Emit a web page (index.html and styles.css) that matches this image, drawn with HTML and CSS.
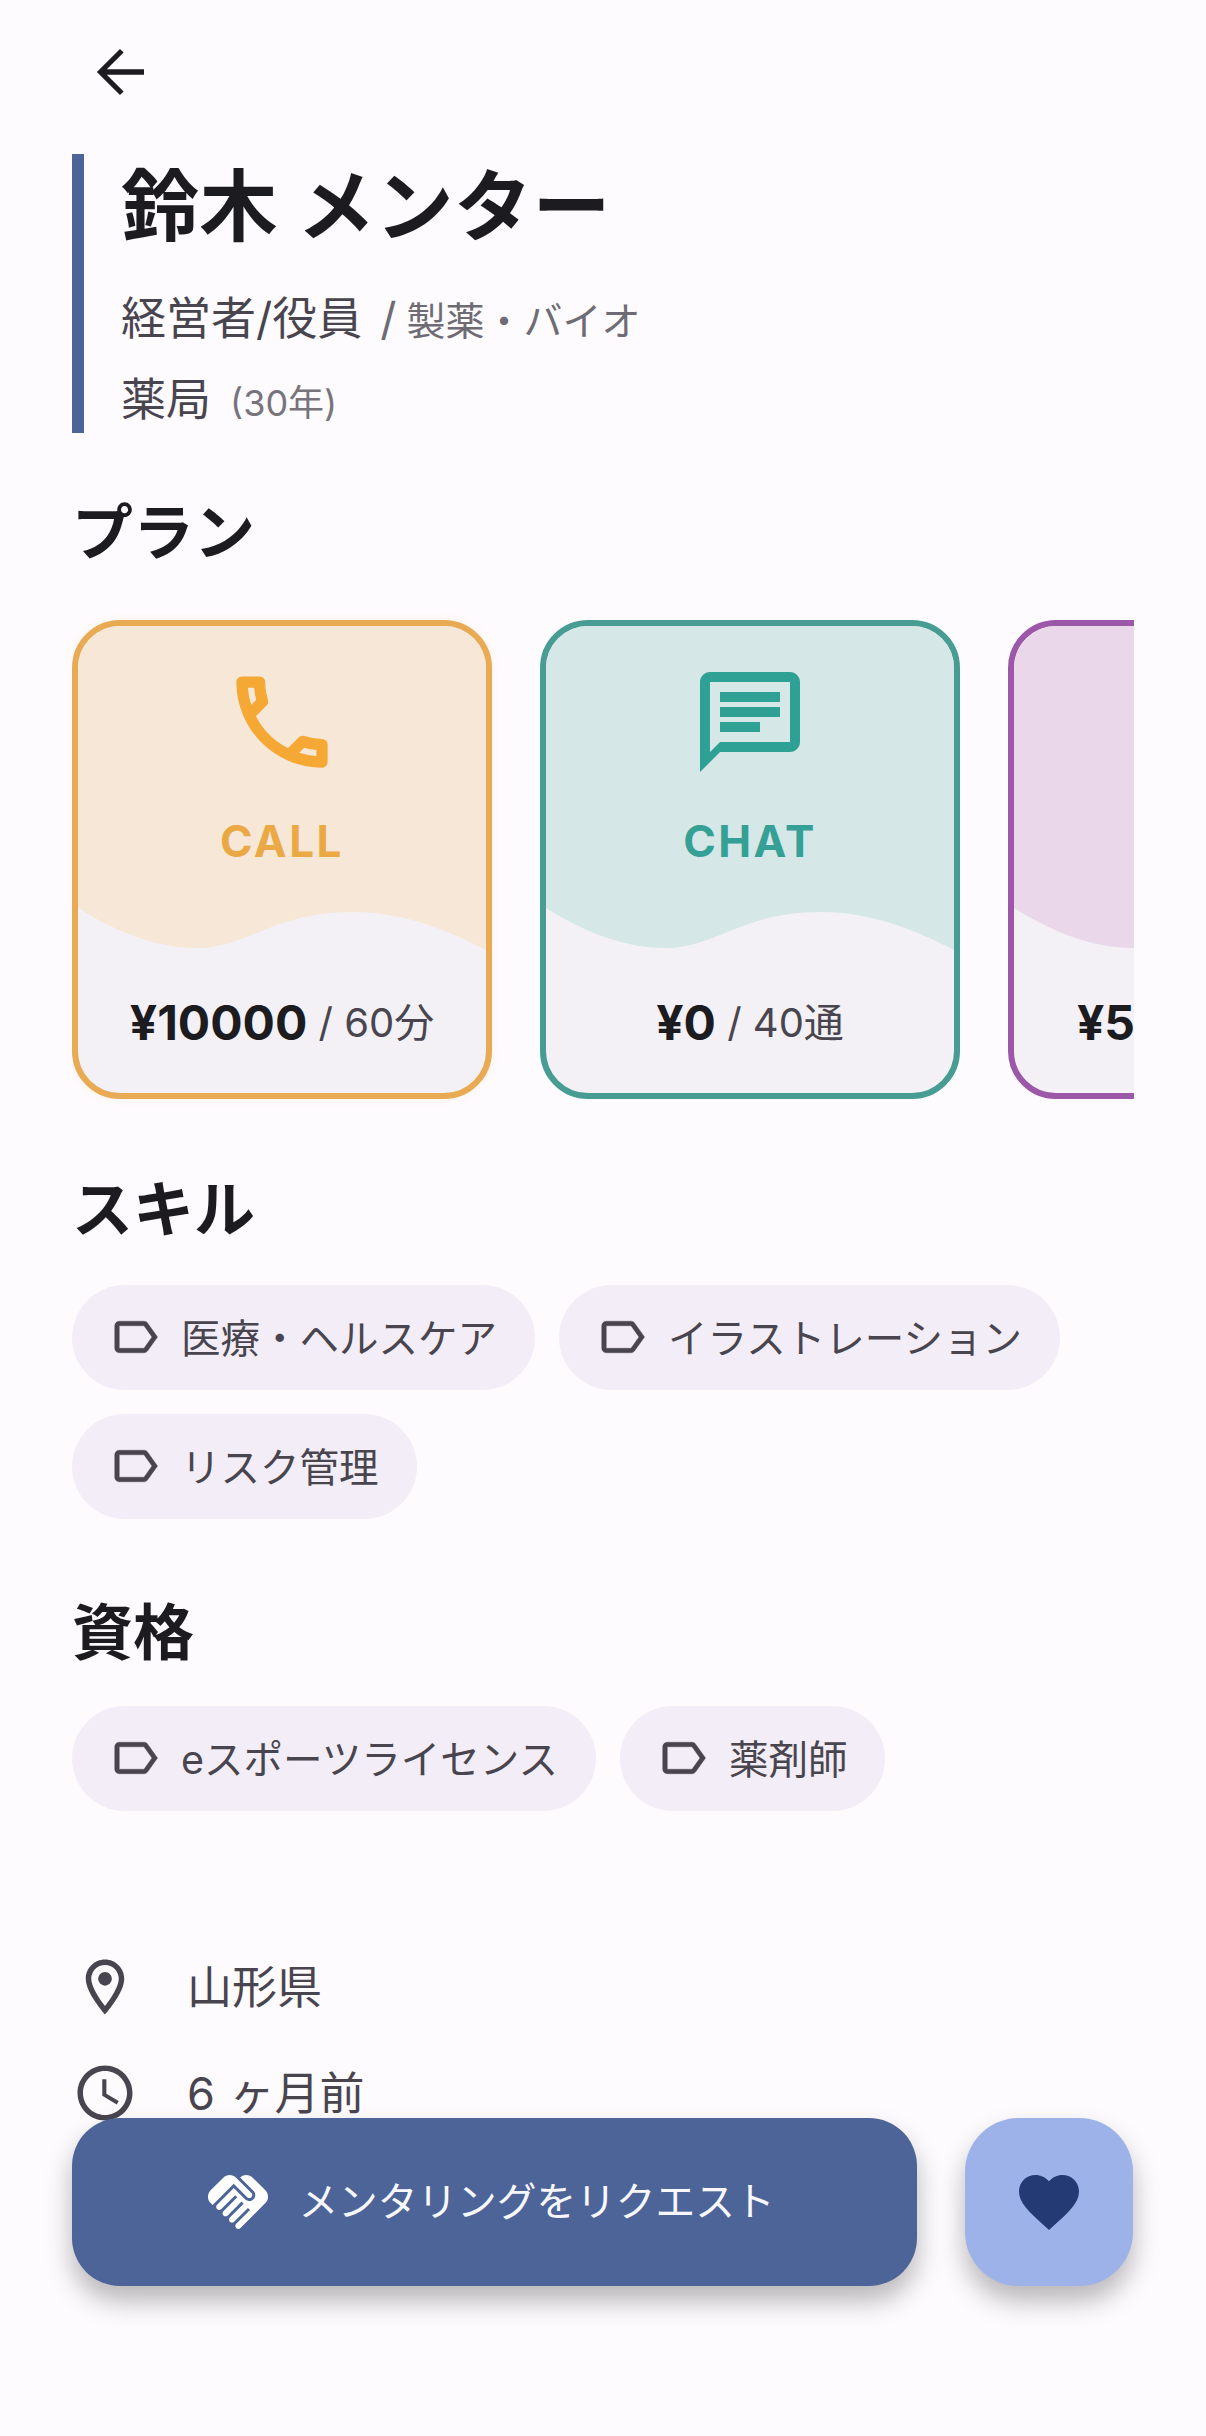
FILE: index.html
```html
<!DOCTYPE html>
<html lang="ja">
<head>
<meta charset="utf-8">
<title>鈴木 メンター</title>
<link rel="stylesheet" href="styles.css">
</head>
<body>
<div class="page">
  <div class="back">
    <svg class="back-icon" viewBox="0 0 24 24"><path d="M20 11.1H7.6l5.6-5.6L12 4.3 4.3 12l7.7 7.7 1.2-1.2-5.6-5.6H20z"/></svg>
  </div>
  <header class="profile">
    <h1 class="name">鈴木 メンター</h1>
    <p class="line"><span class="main">経営者/役員</span><span class="slash">/</span><span class="sub">製薬・バイオ</span></p>
    <p class="line second"><span class="main">薬局</span><span class="years">(30年)</span></p>
  </header>

  <h2 class="section plan-title">プラン</h2>
  <div class="plans">
    <article class="plan call">
      <div class="plan-top">
        <svg class="plan-icon" viewBox="0 0 24 24"><path d="M6.54 5c.06.89.21 1.76.45 2.59l-1.2 1.2c-.41-1.2-.67-2.47-.76-3.79h1.51m9.86 12.02c.85.24 1.72.39 2.6.45v1.49c-1.32-.09-2.59-.35-3.8-.75l1.2-1.19M7.5 3H4c-.55 0-1 .45-1 1 0 9.39 7.61 17 17 17 .55 0 1-.45 1-1v-3.49c0-.55-.45-1-1-1-1.24 0-2.45-.2-3.57-.57-.1-.04-.21-.05-.31-.05-.26 0-.51.1-.71.29l-2.2 2.2c-2.83-1.45-5.15-3.76-6.59-6.59l2.2-2.2c.28-.28.36-.67.25-1.02C8.7 6.45 8.5 5.25 8.5 4c0-.55-.45-1-1-1z"/></svg>
        <div class="plan-name">CALL</div>
      </div>
      <svg class="wave" viewBox="0 0 408 50" preserveAspectRatio="none"><path d="M0 0C40 25 80 40 119 40C170 40 195 4 275 4C325 4 370 22 408 42V50H0Z"/></svg>
      <div class="plan-price"><b>¥10000</b> <span class="unit">/ 60分</span></div>
    </article>
    <article class="plan chat">
      <div class="plan-top">
        <svg class="plan-icon" viewBox="0 0 24 24"><path d="M20 2H4c-1.1 0-2 .9-2 2v18l4-4h14c1.1 0 2-.9 2-2V4c0-1.1-.9-2-2-2zm0 14H6l-2 2V4h16v12z"/><path d="M6 12h8v2H6zM6 9h12v2H6zM6 6h12v2H6z"/></svg>
        <div class="plan-name">CHAT</div>
      </div>
      <svg class="wave" viewBox="0 0 408 50" preserveAspectRatio="none"><path d="M0 0C40 25 80 40 119 40C170 40 195 4 275 4C325 4 370 22 408 42V50H0Z"/></svg>
      <div class="plan-price"><b>¥0</b> <span class="unit">/ 40通</span></div>
    </article>
    <article class="plan video">
      <div class="plan-top"></div>
      <svg class="wave" viewBox="0 0 408 50" preserveAspectRatio="none"><path d="M0 0C40 25 80 40 119 40C170 40 195 4 275 4C325 4 370 22 408 42V50H0Z"/></svg>
      <div class="plan-price"><b>¥5000</b> <span class="unit">/ 60分</span></div>
    </article>
  </div>

  <h2 class="section skill-title">スキル</h2>
  <div class="chips">
    <span class="chip"><svg class="tag" viewBox="0 0 24 24"><path d="M17.63 5.84C17.27 5.33 16.67 5 16 5L5 5.01C3.9 5.01 3 5.9 3 7v10c0 1.1.9 1.99 2 1.99L16 19c.67 0 1.27-.33 1.63-.84L22 12l-4.37-6.16zM16 17H5V7h11l3.55 5L16 17z"/></svg>医療・ヘルスケア</span>
    <span class="chip"><svg class="tag" viewBox="0 0 24 24"><path d="M17.63 5.84C17.27 5.33 16.67 5 16 5L5 5.01C3.9 5.01 3 5.9 3 7v10c0 1.1.9 1.99 2 1.99L16 19c.67 0 1.27-.33 1.63-.84L22 12l-4.37-6.16zM16 17H5V7h11l3.55 5L16 17z"/></svg>イラストレーション</span>
    <span class="chip"><svg class="tag" viewBox="0 0 24 24"><path d="M17.63 5.84C17.27 5.33 16.67 5 16 5L5 5.01C3.9 5.01 3 5.9 3 7v10c0 1.1.9 1.99 2 1.99L16 19c.67 0 1.27-.33 1.63-.84L22 12l-4.37-6.16zM16 17H5V7h11l3.55 5L16 17z"/></svg>リスク管理</span>
  </div>

  <h2 class="section cert-title">資格</h2>
  <div class="chips">
    <span class="chip"><svg class="tag" viewBox="0 0 24 24"><path d="M17.63 5.84C17.27 5.33 16.67 5 16 5L5 5.01C3.9 5.01 3 5.9 3 7v10c0 1.1.9 1.99 2 1.99L16 19c.67 0 1.27-.33 1.63-.84L22 12l-4.37-6.16zM16 17H5V7h11l3.55 5L16 17z"/></svg>eスポーツライセンス</span>
    <span class="chip"><svg class="tag" viewBox="0 0 24 24"><path d="M17.63 5.84C17.27 5.33 16.67 5 16 5L5 5.01C3.9 5.01 3 5.9 3 7v10c0 1.1.9 1.99 2 1.99L16 19c.67 0 1.27-.33 1.63-.84L22 12l-4.37-6.16zM16 17H5V7h11l3.55 5L16 17z"/></svg>薬剤師</span>
  </div>

  <div class="info">
    <div class="info-row">
      <svg class="info-icon" viewBox="0 0 24 24"><path d="M12 2C8.13 2 5 5.13 5 9c0 5.25 7 13 7 13s7-7.75 7-13c0-3.87-3.13-7-7-7zM7 9c0-2.76 2.24-5 5-5s5 2.24 5 5c0 2.88-2.88 7.19-5 9.88C9.92 16.21 7 11.85 7 9z"/><circle cx="12" cy="9" r="2.5"/></svg>
      <span class="info-text">山形県</span>
    </div>
    <div class="info-row">
      <svg class="info-icon" viewBox="0 0 24 24"><path d="M11.99 2C6.47 2 2 6.48 2 12s4.47 10 9.99 10C17.52 22 22 17.52 22 12S17.52 2 11.99 2zM12 20c-4.42 0-8-3.58-8-8s3.58-8 8-8 8 3.58 8 8-3.58 8-8 8z"/><path d="M12.5 7H11v6l5.25 3.15.75-1.23-4.5-2.67z"/></svg>
      <span class="info-text">6 ヶ月前</span>
    </div>
  </div>

  <div class="actions">
    <button class="request">
      <svg class="shake" viewBox="0 0 24 24"><path d="M16.48 10.41c-.39.39-1.04.39-1.43 0l-4.47-4.46-7.05 7.04-.66-.63c-1.17-1.17-1.17-3.07 0-4.24l4.24-4.24c1.17-1.17 3.07-1.17 4.24 0L16.48 9c.39.39.39 1.02 0 1.41zM17.18 8.29c.78.78.78 2.05 0 2.83-1.27 1.27-2.61.22-2.83 0l-3.76-3.76-5.57 5.57c-.39.39-.39 1.02 0 1.41.39.39 1.02.39 1.42 0l4.62-4.62.71.71-4.62 4.62c-.39.39-.39 1.02 0 1.41.39.39 1.02.39 1.42 0l4.62-4.62.71.71-4.62 4.62c-.39.39-.39 1.02 0 1.41.39.39 1.02.39 1.41 0l4.62-4.62.71.71-4.62 4.62c-.39.39-.39 1.02 0 1.41.39.39 1.02.39 1.41 0l8.32-8.34c1.17-1.17 1.17-3.07 0-4.24l-4.24-4.24c-1.15-1.15-3.01-1.17-4.18-.06l4.58 4.59z"/></svg>
      <span class="request-text">メンタリングをリクエスト</span>
    </button>
    <button class="fav">
      <svg class="heart" viewBox="0 0 24 24"><path d="M12 21.35l-1.45-1.32C5.4 15.36 2 12.28 2 8.5 2 5.42 4.42 3 7.5 3c1.74 0 3.41.81 4.5 2.09C13.09 3.81 14.76 3 16.5 3 19.58 3 22 5.42 22 8.5c0 3.78-3.4 6.86-8.55 11.54L12 21.35z"/></svg>
    </button>
  </div>
</div>
</body>
</html>
```

FILE: styles.css
```css
* { box-sizing: border-box; }
html, body { margin: 0; padding: 0; }
body {
  background: #fefbfe;
  font-family: Inter, "Noto Sans CJK JP", sans-serif;
  color: #1c1b1f;
}
.page {
  position: relative;
  width: 1206px;
  height: 2436px;
  overflow: hidden;
  padding: 36px 72px 0;
}
.back { height: 72px; margin: 0 0 46px 12px; }
.back-icon { display: block; width: 72px; height: 72px; fill: #1c1b1f; }

.profile {
  height: 279px;
  padding-top: 3px;
  border-left: 12px solid #4d6499;
  padding-left: 37px;
}
.name { margin: 0; font-size: 78px; line-height: 100px; font-weight: 700; letter-spacing: .5px; }
.line { margin: 29px 0 0; height: 66px; line-height: 66px; white-space: nowrap; color: #49454f; }
.line.second { margin-top: 15px; }
.main { font-size: 45px; }
.slash { font-size: 45px; color: #6f6b74; margin-left: 18px; margin-right: 10px; }
.sub { font-size: 39px; color: #6f6b74; }
.years { font-size: 36px; color: #77747c; margin-left: 19px; }

.section { margin: 0; font-size: 61px; line-height: 80px; font-weight: 700; }
.plan-title { margin-top: 60px; }
.skill-title { margin-top: 59px; }
.cert-title { margin-top: 74px; }

.plans {
  display: flex;
  gap: 48px;
  width: 1062px;
  height: 503px;
  margin-top: 35px;
  padding-top: 12px;
  overflow: hidden;
}
.plan {
  flex: 0 0 420px;
  height: 479px;
  display: flex;
  flex-direction: column;
  border: 6px solid;
  border-radius: 48px;
  overflow: hidden;
  background: #f3f1f5;
}
.plan-top { height: 282px; padding-top: 36px; text-align: center; }
.plan-icon { display: block; width: 120px; height: 120px; margin: 0 auto; }
.plan-name { margin-top: 32px; font-size: 44px; line-height: 54px; font-weight: 700; letter-spacing: 2.5px; }
.wave { display: block; width: 408px; height: 50px; fill: #f3f1f5; }
.plan-price { padding-top: 38px; font-size: 40px; line-height: 54px; text-align: center; color: #49454f; white-space: nowrap; }
.plan-price b { font-size: 48px; color: #1c1b1f; }
.unit { vertical-align: 3px; }

.call { border-color: #e8aa52; box-shadow: 0 0 10px rgba(232,170,82,.12); }
.call .plan-top, .call .wave { background: #f6e7d6; }
.call .plan-icon { fill: #f5a833; stroke: #f5a833; stroke-width: .25; }
.call .plan-name { color: #eba945; }
.chat { border-color: #479c94; }
.chat .plan-top, .chat .wave { background: #d5e7e6; }
.chat .plan-icon { fill: #2fa094; }
.chat .plan-name { color: #35a095; }
.video { border-color: #9d57a9; }
.video .plan-top, .video .wave { background: #ead7ea; }

.chips { display: flex; flex-wrap: wrap; gap: 24px; margin-top: 35px; }
.cert-title + .chips { margin-top: 33px; }
.chip {
  display: inline-flex;
  align-items: center;
  height: 105px;
  padding: 0 38px 5px 36px;
  border-radius: 53px;
  background: #f3edf7;
  font-size: 39.5px;
  color: #49454f;
  white-space: nowrap;
}
.tag { flex: none; width: 54px; height: 54px; margin: 3px 19px 0 0; fill: #49454f; stroke: #49454f; stroke-width: .2; }

.info { margin-top: 143px; display: flex; flex-direction: column; gap: 40px; }
.info-row { display: flex; align-items: center; height: 66px; font-size: 45px; color: #49454f; white-space: nowrap; }
.info-icon { flex: none; width: 66px; height: 66px; margin-right: 49px; fill: #49454f; }
.info-text { margin-bottom: 5px; word-spacing: 2px; }

.actions {
  position: absolute;
  left: 72px;
  top: 2118px;
  display: flex;
  gap: 48px;
}
.request, .fav {
  display: flex;
  align-items: center;
  justify-content: center;
  height: 168px;
  border: 0;
  padding: 0;
  font-family: inherit;
  box-shadow: 0 15px 27px rgba(0, 0, 0, .28);
}
.request {
  width: 845px;
  padding-right: 12px;
  border-radius: 48px;
  background: #4d6499;
  color: #f8f8fc;
  font-size: 39.7px;
}
.request-text { margin-bottom: 8px; }
.shake { width: 72px; height: 72px; margin-right: 24px; fill: #fff; }
.fav { width: 168px; border-radius: 54px; background: #9cb2e8; }
.heart { width: 72px; height: 72px; fill: #243a74; }
```
